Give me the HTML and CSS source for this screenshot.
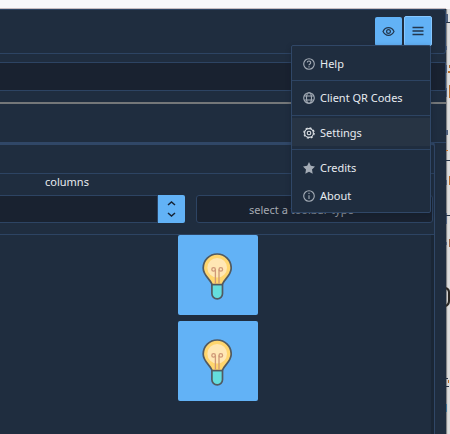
FILE: index.html
```
<!DOCTYPE html>
<html lang="en">
<head>
<meta charset="utf-8">
<title>Toolbar editor</title>
<link rel="stylesheet" href="styles.css">
</head>
<body>
<svg class="defs" aria-hidden="true">
  <symbol id="bulb" viewBox="0 0 32 50">
    <path d="M11.900 32.500h10.600v9.300a5.300 5 0 0 1-10.600 0z" fill="#64dedd" stroke="#515a61" stroke-width="1.700"/>
    <path d="M12.200 32.500C9.800 26.500 3.200 23.500 3.200 16a14 14 0 0 1 28 0C31.200 23.500 24.600 26.500 22.200 32.500z" fill="#ffd66e" stroke="#515a61" stroke-width="1.700"/>
    <circle cx="17.200" cy="15.800" r="9.800" fill="#ffe7b4"/>
    <g fill="none" stroke="#cf9877" stroke-width="1.300"><path d="M15.400 31.700V17.500M19 31.700V17.500"/><circle cx="13.600" cy="17.400" r="1.800"/><circle cx="20.800" cy="17.400" r="1.800"/></g>
  </symbol>
</svg>
<div class="screen">
  <main class="app">
    <div class="window-top"></div>
    <header class="header">
      <button class="tool" aria-label="Preview"><svg width="13" height="11" viewBox="0 0 13 11" fill="none" stroke="currentColor" stroke-width="1.200"><path d="M1 5.500C3.500.4 9.500.4 12 5.500 9.500 10.600 3.500 10.600 1 5.500z"/><circle cx="6.500" cy="5.500" r="1.900"/></svg></button>
      <button class="tool active" aria-label="Menu"><svg width="12" height="10" viewBox="0 0 12 10" fill="none" stroke="currentColor" stroke-width="1.300"><path d="M.5 1.500h11M.5 5h11M.5 8.500h11"/></svg></button>
    </header>
    <div class="search"></div>
    <div class="title-row"></div>
    <section class="panel">
      <div class="panel-title"></div>
      <div class="labels"><span>columns</span></div>
      <div class="fields">
        <div class="number"></div>
        <div class="stepper"><svg width="9" height="18" viewBox="0 0 9 18" fill="none" stroke="currentColor" stroke-width="1.500"><path d="M1 5l3.500-3L8 5M1 13l3.500 3L8 13"/></svg></div>
        <div class="select">select a toolbar type</div>
      </div>
      <div class="tiles">
        <div class="tile"><svg width="32" height="50"><use href="#bulb"/></svg></div>
        <div class="tile"><svg width="32" height="50"><use href="#bulb"/></svg></div>
      </div>
    </section>
    <nav class="menu">
      <div class="item help"><svg viewBox="0 0 12 12"><circle cx="6" cy="6" r="5.300"/><path d="M4.300 4.600c.1-2.200 3.500-2 3.400.1C7.700 6 6 5.900 6 7.300M6 8.300v1.200"/></svg>Help</div>
      <div class="item client"><svg viewBox="0 0 12 12"><circle cx="6" cy="6" r="5.300"/><ellipse cx="6" cy="6" rx="2.500" ry="5.300"/><path d="M1.200 4h9.600M1.200 8h9.600"/></svg>Client QR Codes</div>
      <div class="item settings"><svg viewBox="0 0 12 12"><circle cx="6" cy="6" r="4.400"/><circle cx="6" cy="6" r="5.200" stroke-dasharray="2.040 2.040"/><circle cx="6" cy="6" r="1.800"/></svg>Settings</div>
      <div class="item credits"><svg viewBox="0 0 12 12"><path class="solid" d="M6 0l1.800 3.800 4.200.6-3 3 .7 4.300L6 9.700l-3.700 2 .7-4.300-3-3 4.200-.6z"/></svg>Credits</div>
      <div class="item about"><svg viewBox="0 0 12 12"><circle cx="6" cy="6" r="5.300"/><path d="M6 5.200v3.900M6 2.800v1.300"/></svg>About</div>
    </nav>
  </main>
  <aside class="edge"><svg width="4" height="434" viewBox="0 0 4 434">
    <path fill="#4c5e7a" d="M0 14h2v8H0zM0 46h1v4H0zM0 65h1v8H0zM0 88h1v9H0zM0 130h2v5H0zM0 180h1v5H0zM0 213h1v11H0zM0 242h1v3H0z"/>
    <path fill="#273447" d="M0 22h4v1H0zM0 160h4v1H0zM0 215h4v1H0zM0 378h2v1H0zM0 386h3v1H0z"/>
    <path fill="#b96b29" d="M3 65h1v3H3zM2 71h2v2H2zM3 85h1v13H3zM3 176h1v9H3zM0 150h2v1H0zM2 380h1v3H2z"/>
    <path fill="#9c6040" d="M3 239h1v8H3z"/>
    <path fill="none" stroke="#2b2824" stroke-width="2" d="M0 288c2 1 3 2 3 4v9c0 2-1 4-3 5"/>
    <path fill="#3b7193" d="M0 404h1v8H0z"/>
  </svg></aside>
</div>
</body>
</html>
```
FILE: styles.css
```
* { box-sizing: border-box; }
body { margin: 0; font: 11px/14px "Noto Sans", sans-serif; color: #e7ebf0; overflow: hidden; }
.defs { position: absolute; width: 0; height: 0; }
.screen { display: flex; width: 450px; height: 434px; }
.app { position: relative; width: 446px; height: 434px; background: #1f2d3f; overflow: hidden; }
.window-top { height: 9px; background: #f8f8fb; border-bottom: 1px solid #c8bdc1; }
.header { height: 45px; display: flex; justify-content: flex-end; gap: 2px; padding: 6px 13px 0 0; border: 1px solid #2d4463; border-left: 0; border-radius: 0 3px 3px 0; }
.tool { width: 27px; height: 29px; margin-top: 1px; padding: 0; display: flex; align-items: center; justify-content: center; border: 0; border-radius: 2px; background: #62b2f6; color: #22364d; }
.tool.active { width: 28px; height: 30px; margin-top: 0; border: 1px solid #86c7ff; }
.search { height: 29px; margin-top: 8px; border: 1px solid #2d4463; border-left: 0; background: #192230; }
.title-row { height: 41px; margin-top: 11px; border-top: 2px solid #747779; border-bottom: 1px solid #2d4463; }
.panel { width: 435px; height: 292px; margin-top: -1px; border-top: 3px solid #304767; border-right: 1px solid #304767; border-radius: 0 4px 0 0; }
.panel-title { height: 29px; border-bottom: 1px solid #2d4463; }
.labels { height: 21px; padding: 1px 0 0 45px; }
.fields { height: 40px; display: flex; border-bottom: 1px solid #2d4463; }
.number, .stepper, .select { height: 28px; }
.number { width: 158px; border: 1px solid #2d4463; border-left: 0; background: #192230; }
.stepper { width: 27px; display: flex; align-items: center; justify-content: center; background: #62b2f6; color: #172334; border-radius: 0 2px 2px 0; }
.select { width: 237px; margin-left: 11px; padding: 7px 0 0 52px; border: 1px solid #2d4463; border-radius: 3px; background: #192230; color: #a4a9b0; }
.tiles { height: 199px; display: flex; flex-direction: column; gap: 6px; padding-left: 178px; border-right: 3px solid #1a2635; }
.tile { width: 80px; height: 80px; padding: 17px 0 0 22px; border-radius: 2px; background: #62b2f6; }
.tile svg { display: block; }
.menu { position: absolute; left: 291px; top: 45px; width: 140px; height: 168px; background: #1f2d3f; border: 1px solid #304767; border-radius: 2px; box-shadow: 0 2px 5px #111a2666; }
.item { display: flex; align-items: center; gap: 5px; height: 35px; padding-left: 11px; border-bottom: 1px solid #2d4463; }
.item svg { width: 12px; height: 12px; fill: none; stroke: #a4acb6; stroke-width: 1.100; }
.item .solid { fill: #a4acb6; stroke: none; }
.help { padding-top: 1px; }
.settings { height: 34px; background: linear-gradient(#1f2d3f 2px, #273444 2px 30px, #1f2d3f 30px); }
.settings svg { stroke: #dfe3e7; }
.credits { height: 28px; margin-top: 4px; border: 0; }
.about { height: 28px; border: 0; }
.edge { width: 4px; height: 434px; background: linear-gradient(90deg, #858789 1px, #d0d0d0 1px 2px, #dedddd 2px); border-top: 9px solid #f8f8fb; overflow: hidden; }
.edge svg { display: block; margin-top: -9px; }
```
